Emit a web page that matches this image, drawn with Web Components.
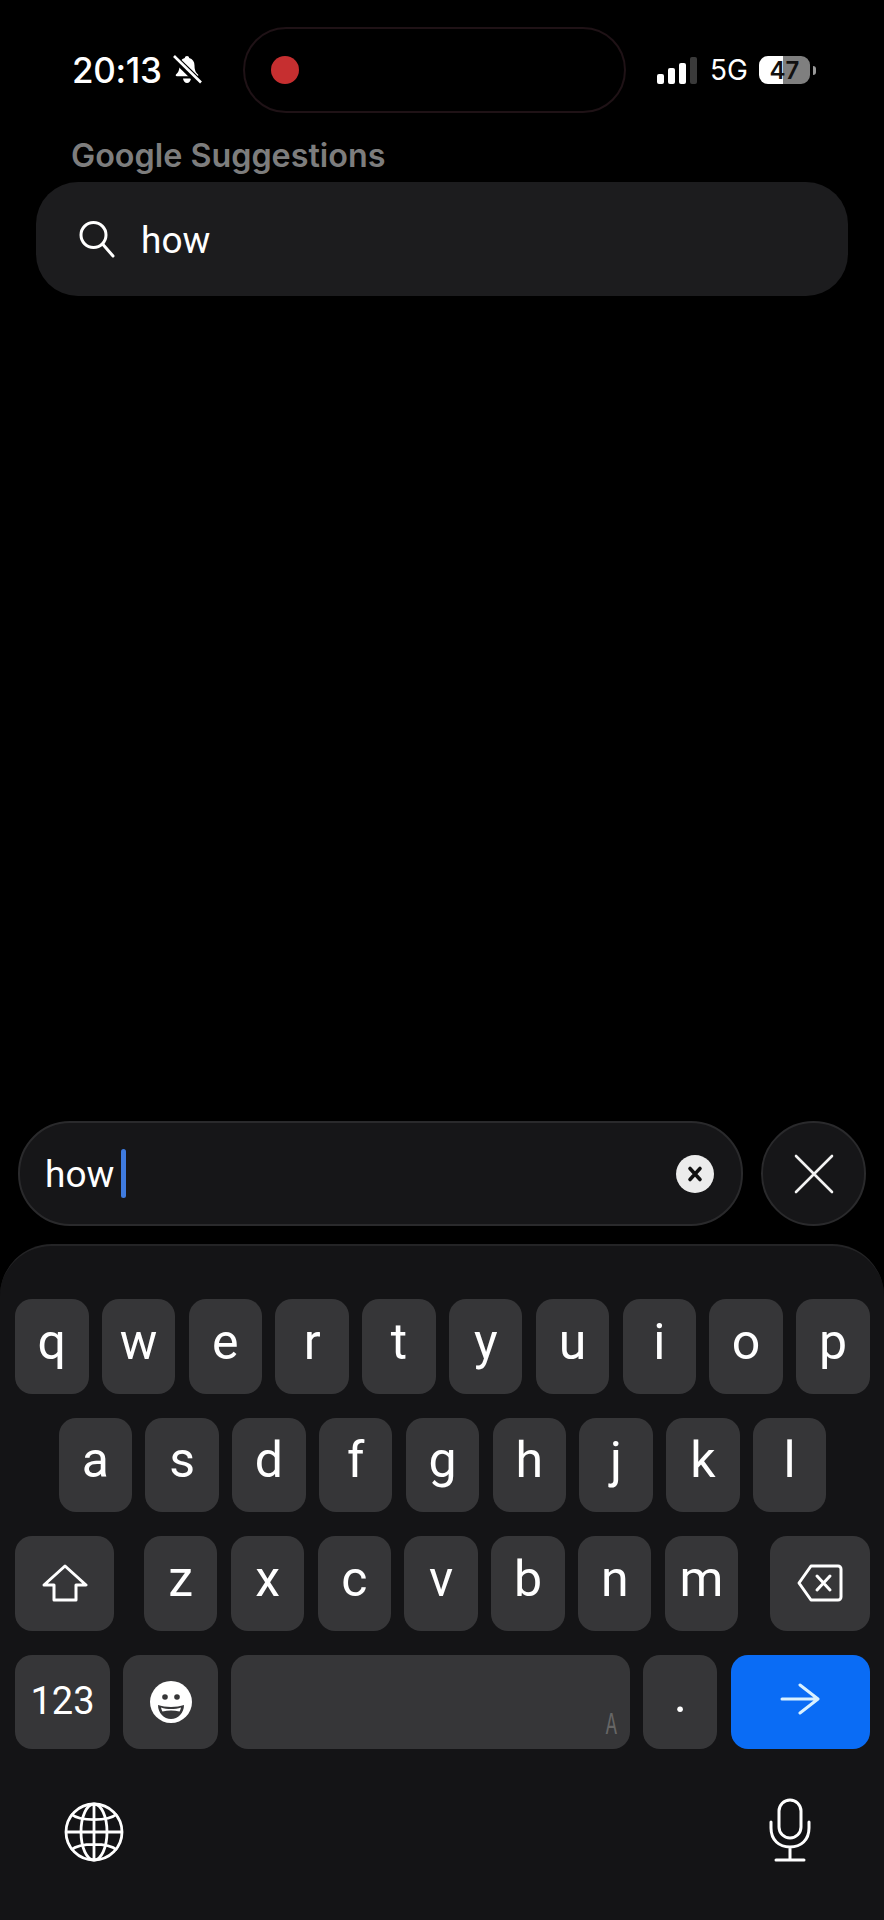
<!DOCTYPE html>
<html>
<head>
<meta charset="utf-8">
<title>Search</title>
<style>
  html, body { margin: 0; padding: 0; background: #000; }
  body { font-family: Roboto, "Liberation Sans", sans-serif; font-weight: 400; color: #fff; }
  .page { display: flex; flex-direction: column; height: 1920px; width: 884px; overflow: hidden; }
  .spacer { flex: 1; }
</style>
</head>
<body>
<div class="page">
  <status-bar></status-bar>
  <suggestion-panel heading="Google Suggestions">how</suggestion-panel>
  <div class="spacer"></div>
  <input-bar>how</input-bar>
  <ios-keyboard></ios-keyboard>
</div>

<script>
class StatusBar extends HTMLElement {
    connectedCallback() {
        this.attachShadow({ mode: 'open' }).innerHTML = `
            <style>
                :host { display: flex; align-items: center; height: 86px; margin-top: 27px; padding-left: 72px; box-sizing: border-box; font-family: Inter, sans-serif; }
                .time { flex: none; font-size: 35px; font-weight: 500; letter-spacing: -0.3px; width: 100px; }
                .bell { flex: none; width: 30px; height: 30px; }
                .island { flex: none; width: 383px; height: 86px; margin-left: 41px; box-sizing: border-box; border: 2px solid #1f1216; border-radius: 43px; display: flex; align-items: center; padding-left: 26px; }
                .dot { width: 28px; height: 28px; border-radius: 50%; background: #c62f30; }
                .right { flex: none; display: flex; align-items: center; margin-left: 31px; }
                .signal { flex: none; width: 40px; height: 28px; }
                .net { flex: none; font-size: 28px; font-weight: 400; margin-left: 13px; width: 40px; }
                .batt { flex: none; width: 51px; height: 28px; margin-left: 9px; border-radius: 9px; overflow: hidden; background: linear-gradient(90deg, #fff 0 47%, #7f7f7f 47%); color: #111; font-size: 24px; font-weight: 600; display: flex; align-items: center; justify-content: center; }
                .nub { flex: none; width: 3px; height: 9px; margin-left: 3px; background: #999; border-radius: 0 3px 3px 0; }
            </style>
            <span class="time">20:13</span>
            <svg class="bell" viewBox="0 0 30 30">
                <path d="M15 1c-1.300 0-2.100.9-2.200 2-3.500 1-5.300 3.800-5.300 7.400 0 5-1.500 7.100-3.500 9.100-.6.700-.2 1.800.9 1.800h20.200c1.100 0 1.500-1.100.9-1.800-2-2-3.500-4.100-3.500-9.100 0-3.600-1.800-6.400-5.300-7.400-.1-1.100-.9-2-2.200-2z" fill="#fff"/>
                <path d="M11 23.500h8c-.3 2.500-2 4.500-4 4.500s-3.700-2-4-4.500z" fill="#fff"/>
                <path d="M1 1.500 L29 29" stroke="#000" stroke-width="7"/>
                <path d="M2 1 L29 27.500" stroke="#fff" stroke-width="2.600"/>
            </svg>
            <div class="island"><span class="dot"></span></div>
            <div class="right">
                <svg class="signal" viewBox="0 0 40 28">
                    <rect x="0" y="18" width="7" height="10" rx="2" fill="#fff"/>
                    <rect x="11" y="12" width="7" height="16" rx="2" fill="#fff"/>
                    <rect x="22" y="7" width="7" height="21" rx="2" fill="#fff"/>
                    <rect x="33" y="1" width="7" height="27" rx="2" fill="#3a3a3a"/>
                </svg>
                <span class="net">5G</span>
                <span class="batt">47</span>
                <span class="nub"></span>
            </div>
        `;
    }
}
customElements.define('status-bar', StatusBar);

class SuggestionPanel extends HTMLElement {
    connectedCallback() {
        const heading = this.getAttribute('heading') || '';
        this.attachShadow({ mode: 'open' }).innerHTML = `
            <style>
                :host { display: block; padding: 0 36px; }
                h2 { margin: 26px 0 10px 35px; font-family: Inter, sans-serif; font-size: 32.300px; line-height: 33px; font-weight: 600; color: #7d7d7d; }
                .row { display: flex; align-items: center; height: 114px; border-radius: 42px; background: #1c1c1e; padding-left: 42px; font-size: 37px; }
                .text { padding-top: 2px; }
                svg { width: 38px; height: 38px; margin-right: 25px; }
            </style>
            <h2>${heading}</h2>
            <div class="row">
                <svg viewBox="0 0 38 38" fill="none" stroke="#fff" stroke-width="3" stroke-linecap="round">
                    <circle cx="15.500" cy="15" r="12.500"/>
                    <path d="M25 24.500 L35 36"/>
                </svg>
                <span class="text"><slot></slot></span>
            </div>
        `;
    }
}
customElements.define('suggestion-panel', SuggestionPanel);

class InputBar extends HTMLElement {
    connectedCallback() {
        this.attachShadow({ mode: 'open' }).innerHTML = `
            <style>
                :host { display: flex; gap: 18px; padding: 0 18px; }
                .field, .close { box-sizing: border-box; height: 105px; background: #161618; border: 2px solid #2a2a2c; display: flex; align-items: center; }
                .field { flex: 1; border-radius: 52px; padding: 0 27px 0 25px; font-size: 37px; }
                .text { padding-top: 2px; }
                .caret { width: 5px; height: 49px; border-radius: 3px; background: #3f7be0; margin-left: 7px; }
                .clear { width: 38px; height: 38px; margin-left: auto; }
                .close { width: 105px; border-radius: 50%; justify-content: center; }
                .close svg { width: 40px; height: 40px; }
            </style>
            <div class="field">
                <span class="text"><slot></slot></span><span class="caret"></span>
                <svg class="clear" viewBox="0 0 38 38">
                    <circle cx="19" cy="19" r="19" fill="#ececec"/>
                    <path d="M14 13.500 L24 24.500 M24 13.500 L14 24.500" stroke="#111" stroke-width="3.600" stroke-linecap="round"/>
                </svg>
            </div>
            <div class="close">
                <svg viewBox="0 0 40 40" stroke="#f2f2f2" stroke-width="2.600" stroke-linecap="round">
                    <path d="M2 2 L38 38 M38 2 L2 38"/>
                </svg>
            </div>
        `;
    }
}
customElements.define('input-bar', InputBar);

class KeyCap extends HTMLElement {
    connectedCallback() {
        this.attachShadow({ mode: 'open' }).innerHTML = `
            <style>
                :host { display: flex; align-items: center; justify-content: center; box-sizing: border-box; width: 73.500px; height: 94.500px; flex: none; border-radius: 17px; background: #363638; color: #fff; font-size: 50px; padding-bottom: 9px; }
                :host([wide]) { font-size: 38px; padding-bottom: 1px; }
                :host([icon]) { padding-bottom: 0; }
                :host([blue]) { background: #0a6cf5; padding-bottom: 6px; }
            </style>
            <slot></slot>
        `;
    }
}
customElements.define('key-cap', KeyCap);

const ICONS = {
    shift: `<svg width="46" height="38" viewBox="0 0 46 38" fill="none" stroke="#fff" stroke-width="3" stroke-linejoin="round"><path d="M23 2 L44 21 H34 V36 H12 V21 H2 Z"/></svg>`,
    back: `<svg width="46" height="38" viewBox="0 0 46 38" fill="none" stroke="#fff" stroke-width="3" stroke-linejoin="round" stroke-linecap="round"><path d="M14 2 H41 a3 3 0 0 1 3 3 V33 a3 3 0 0 1 -3 3 H14 L2 19 Z"/><path d="M20 12 L33 26 M33 12 L20 26"/></svg>`,
    emoji: `<svg width="42" height="42" viewBox="0 0 42 42"><circle cx="21" cy="21" r="21" fill="#fff"/><circle cx="15" cy="16" r="2.800" fill="#363638"/><circle cx="27" cy="16" r="2.800" fill="#363638"/><path d="M8 24 C15 26.500 27 26.500 34 24 C34 32 28 38 21 38 C14 38 8 32 8 24 Z" fill="#363638"/><path d="M11 26.500 C17 28.500 25 28.500 31 26.500 C30.500 28.500 30 30 29.500 30.500 C24 29 18 29 12.500 30.500 C12 30 11.500 28.500 11 26.500 Z" fill="#fff"/></svg>`,
    arrow: `<svg width="40" height="32" viewBox="0 0 40 32" fill="none" stroke="#d9f1ff" stroke-width="3" stroke-linecap="round" stroke-linejoin="round"><path d="M2 16 H37 M20 2 L38 16 L20 30"/></svg>`,
    globe: `<svg width="60" height="60" viewBox="0 0 60 60" fill="none" stroke="#fff" stroke-width="2.800"><circle cx="30" cy="30" r="28"/><ellipse cx="30" cy="30" rx="13" ry="28"/><path d="M30 2 V58 M2 30 H58 M7 12 C16 19.500 44 19.500 53 12 M7 48 C16 40.500 44 40.500 53 48"/></svg>`,
    mic: `<svg style="margin-top:-4px" width="42" height="64" viewBox="0 0 42 64" fill="none" stroke="#fff" stroke-width="3" stroke-linecap="round"><rect x="10" y="2" width="22" height="38" rx="11"/><path d="M2 24 V30 C2 42 10 49 21 49 C32 49 40 42 40 30 V24 M21 49 V62 M7 62 H35"/></svg>`
};

class IosKeyboard extends HTMLElement {
    connectedCallback() {
        const keys = (s) => s.split('').map(c => `<key-cap>${c}</key-cap>`).join('');
        this.attachShadow({ mode: 'open' }).innerHTML = `
            <style>
                :host { display: flex; flex-direction: column; height: 676px; margin-top: 18px; box-sizing: border-box; padding: 53px 14px 0 15px; gap: 24px; background: #141416; border-top: 2px solid #242426; border-radius: 52px 52px 0 0; }
                .row { display: flex; gap: 13.300px; }
                .center { justify-content: center; }
                .shift { width: 99px; }
                .back { width: 100px; margin-left: 18.400px; }
                .first { margin-left: 16.700px; }
                .num { width: 95px; }
                .emoji { width: 94.700px; }
                .space { width: 398.700px; position: relative; }
                .dot { width: 74px; padding-bottom: 14px; }
                .ret { width: 139.400px; }
                .hint { position: absolute; right: 9px; bottom: 6px; font-family: "Liberation Mono", monospace; font-size: 31px; color: #666; transform: scaleX(.6); }
                .bottom { display: flex; justify-content: space-between; align-items: flex-start; padding: 29px 59px 0 49px; }
            </style>
            <div class="row">${keys('qwertyuiop')}</div>
            <div class="row center">${keys('asdfghjkl')}</div>
            <div class="row">
                <key-cap class="shift" icon>${ICONS.shift}</key-cap>
                <key-cap class="first">z</key-cap>${keys('xcvbnm')}
                <key-cap class="back" icon>${ICONS.back}</key-cap>
            </div>
            <div class="row">
                <key-cap class="num" wide>123</key-cap>
                <key-cap class="emoji" icon>${ICONS.emoji}</key-cap>
                <key-cap class="space" icon><span class="hint">A</span></key-cap>
                <key-cap class="dot">.</key-cap>
                <key-cap class="ret" blue>${ICONS.arrow}</key-cap>
            </div>
            <div class="bottom">${ICONS.globe}${ICONS.mic}</div>
        `;
    }
}
customElements.define('ios-keyboard', IosKeyboard);
</script>
</body>
</html>
